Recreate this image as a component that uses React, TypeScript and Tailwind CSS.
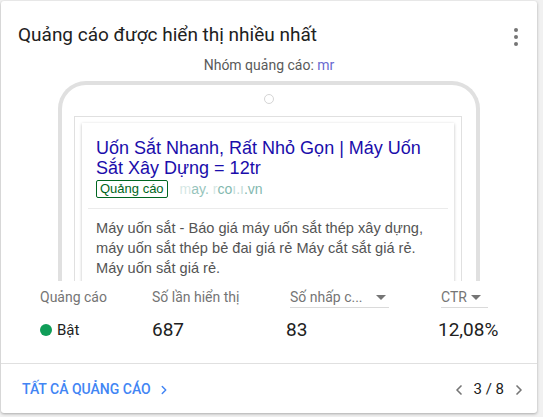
import React from 'react';
import { ChevronLeft, ChevronRight } from 'lucide-react';

const roboto = { fontFamily: 'Roboto, "Noto Sans", sans-serif' };
const arial = { fontFamily: '"Liberation Sans", Arial, sans-serif' };

function PhonePreview() {
  return (
    <div className="h-[200px] overflow-hidden mt-[7px]">
      <div className="w-[422px] h-[260px] mx-auto border-4 border-b-0 border-[#e0e0e0] rounded-t-[28px]">
        <div className="flex justify-center mt-[9px]">
          <div className="w-[10px] h-[10px] rounded-full border border-[#d5d5d5]" />
        </div>
        <div className="ml-[12px] mt-[12px] w-[388px] h-[200px] border border-b-0 border-[#e0e0e0] px-[7px] pt-[6px]" style={arial}>
          <div className="bg-white shadow-[0_1px_3px_rgba(0,0,0,0.25)] pt-[15px] h-[180px]">
            <div className="px-[14px] text-[18px] leading-[20px] text-[#1a0dab]">
              Uốn Sắt Nhanh, Rất Nhỏ Gọn | Máy Uốn Sắt Xây Dựng = 12tr
            </div>
            <div className="px-[14px] mt-px flex items-center gap-[12px] h-[20px]">
              <span className="border border-[#006621] rounded-[2px] px-[3px] text-[13px] leading-[16px] text-[#006621]">
                Quảng cáo
              </span>
              <span className="text-[14px] text-[#2e8a7a]">
                <span className="opacity-20">m</span>
                <span className="opacity-50">ay.</span>
                <span className="opacity-20"> r</span>
                <span className="opacity-60">co</span>
                <span className="opacity-30">ı.ı</span>
                <span className="opacity-60">.vn</span>
              </span>
            </div>
            <div className="mx-[6px] mt-[9px] border-t border-[#ebebeb]" />
            <div className="px-[14px] pt-[9px] text-[14.6px] leading-[20px] text-[#545454]">
              Máy uốn sắt - Báo giá máy uốn sắt thép xây dựng,<br />
              máy uốn sắt thép bẻ đai giá rẻ Máy cắt sắt giá rẻ.<br />
              Máy uốn sắt giá rẻ.
            </div>
          </div>
        </div>
      </div>
    </div>
  );
}

function Caret() {
  return <span className="inline-block w-0 h-0 border-l-[5px] border-r-[5px] border-t-[5px] border-l-transparent border-r-transparent border-t-[#757575]" />;
}

export default function App() {
  return (
    <div className="w-[543px] h-[417px] bg-[#f1f1f1] pl-px pt-px" style={roboto}>
      <div className="w-[536px] bg-white rounded-[3px] shadow-[0_1px_3px_rgba(0,0,0,0.3)]">
        {/* Header */}
        <div className="flex items-start justify-between pt-[20px] pl-[17px] pr-[19px]">
          <h2 className="text-[19px] leading-[28px] text-[#212121]">Quảng cáo được hiển thị nhiều nhất</h2>
          <div className="flex flex-col gap-[3px] pt-[7px]">
            <span className="w-[4px] h-[4px] rounded-full bg-[#757575]" />
            <span className="w-[4px] h-[4px] rounded-full bg-[#757575]" />
            <span className="w-[4px] h-[4px] rounded-full bg-[#757575]" />
          </div>
        </div>
        <div className="text-center text-[14px] leading-[18px] mt-[7px] text-[#5a5a5a]">
          Nhóm quảng cáo: <span className="text-[#6a6ad1]">mr</span>
        </div>

        <PhonePreview />

        {/* Metrics */}
        <div className="pl-[39px] pt-[6px]">
          <div className="grid grid-cols-[112px_138px_151px_auto] text-[14px] leading-[20px] text-[#757575]">
            <div>Quảng cáo</div>
            <div>Số lần hiển thị</div>
            <div className="w-[99px] border-b border-[#dadada] flex items-center justify-between pr-[3px]">
              <span>Số nhấp c...</span>
              <Caret />
            </div>
            <div className="w-[47px] border-b border-[#dadada] flex items-center gap-[4px]">
              <span>CTR</span>
              <Caret />
            </div>
          </div>
          <div className="grid grid-cols-[112px_134px_152px_auto] mt-[8px] h-[26px] items-center text-[#212121]">
            <div className="flex items-center gap-[5px] text-[15px]">
              <span className="w-[12px] h-[12px] rounded-full bg-[#0f9d58]" />
              <span>Bật</span>
            </div>
            <div className="text-[19px]">687</div>
            <div className="text-[19px]">83</div>
            <div className="text-[19px]">12,08%</div>
          </div>
        </div>

        {/* Footer */}
        <div className="mt-[21px] border-t border-[#e0e0e0] h-[50px] pt-[2px] flex items-center justify-between pl-[21px] pr-[10px]">
          <button className="flex items-center gap-[6px] text-[14px] font-medium text-[#4285f4] uppercase">
            <span>Tất cả quảng cáo</span>
            <ChevronRight className="w-[14px] h-[14px]" strokeWidth={2.5} />
          </button>
          <div className="flex items-center gap-[7px] text-[15px] text-[#212121]">
            <ChevronLeft className="w-[16px] h-[16px] text-[#757575]" strokeWidth={2.5} />
            <span>3 / 8</span>
            <ChevronRight className="w-[16px] h-[16px] text-[#757575]" strokeWidth={2.5} />
          </div>
        </div>
      </div>
    </div>
  );
}
